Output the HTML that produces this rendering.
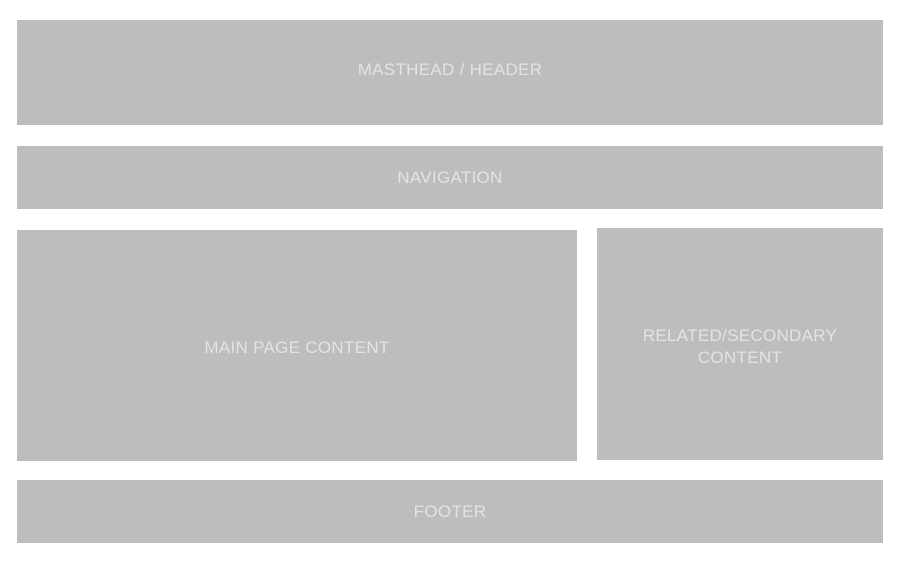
<!DOCTYPE html>
<html><head><style>
html,body{margin:0;padding:0;background:#fff;width:900px;height:563px;overflow:hidden}
.b{position:absolute;box-sizing:border-box;background:#bcbdbf;color:#e3e3e4;font-family:"Liberation Sans",sans-serif;font-size:17px;letter-spacing:0.3px;display:flex;align-items:center;justify-content:center;text-align:center;line-height:22px;font-weight:normal}
</style></head><body>
<div class="b" style="left:17px;top:20px;width:866px;height:105px;padding-bottom:6px">MASTHEAD / HEADER</div>
<div class="b" style="left:17px;top:146px;width:866px;height:63px">NAVIGATION</div>
<div class="b" style="left:17px;top:230px;width:560px;height:231px;padding-top:4px">MAIN PAGE CONTENT</div>
<div class="b" style="left:597px;top:228px;width:286px;height:232px;padding-top:6px">RELATED/SECONDARY<br>CONTENT</div>
<div class="b" style="left:17px;top:480px;width:866px;height:63px">FOOTER</div>
</body></html>
